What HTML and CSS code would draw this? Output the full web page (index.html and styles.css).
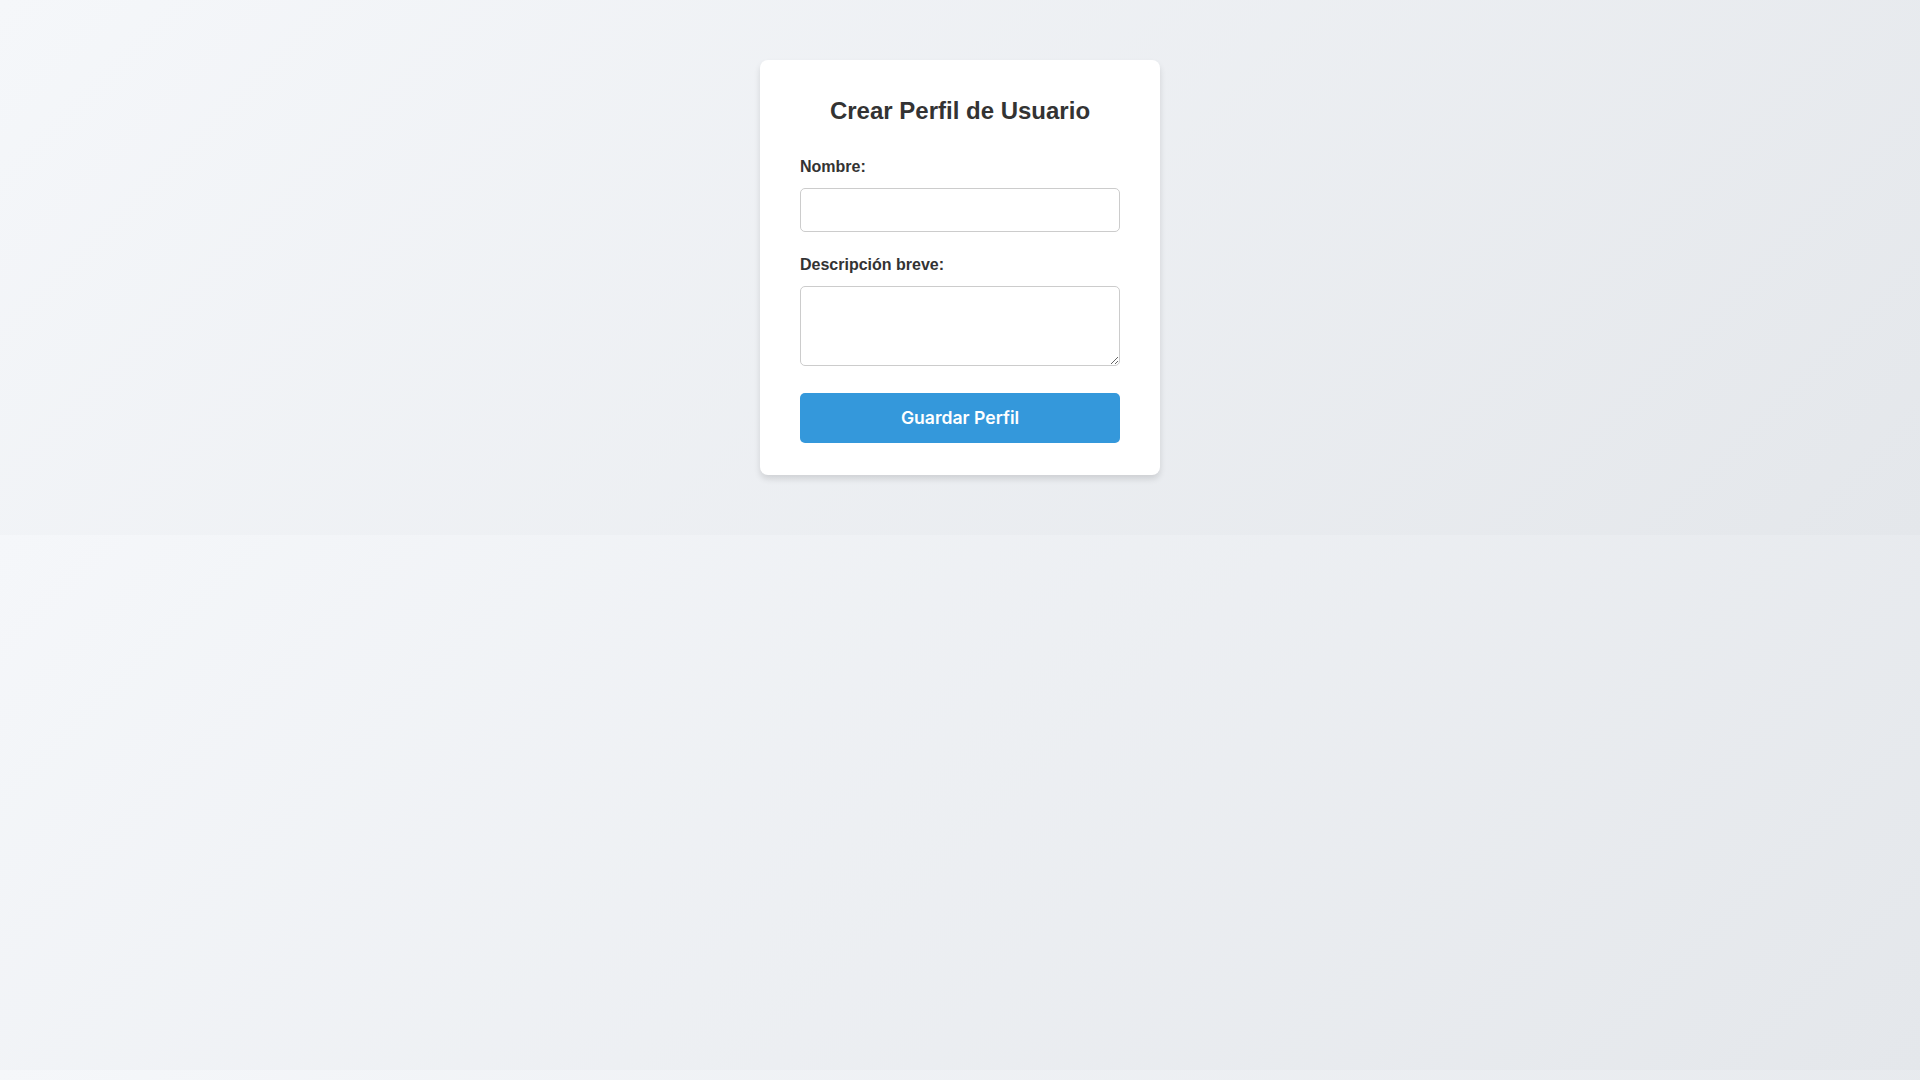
FILE: index.html
```html
<!DOCTYPE html>
<html lang="es">
<head>
<meta charset="utf-8">
<title>Crear Perfil de Usuario</title>
<link rel="stylesheet" href="styles.css">
</head>
<body>
  <div class="card">
    <h2 class="title">Crear Perfil de Usuario</h2>
    <form class="form">
      <div class="form-group">
        <label class="label" for="nombre">Nombre:</label>
        <input class="input" type="text" id="nombre">
      </div>
      <div class="form-group">
        <label class="label" for="desc">Descripción breve:</label>
        <textarea class="textarea" id="desc"></textarea>
      </div>
      <button class="button" type="button">Guardar Perfil</button>
    </form>
  </div>
</body>
</html>
```
FILE: styles.css
```css
body {
  margin: 0;
  padding: 20px;
  font-family: "Liberation Sans", Arial, sans-serif;
  line-height: 1.6;
  color: #333;
  background: linear-gradient(135deg, #f5f7fa 0%, #e4e7eb 100%);
}

.card {
  box-sizing: border-box;
  width: 400px;
  margin: 40px auto;
  padding: 32px 40px;
  background: #fff;
  border-radius: 8px;
  box-shadow: 0 4px 6px rgba(0, 0, 0, 0.12);
}

.title {
  margin: 0 0 24px;
  font-size: 24px;
  text-align: center;
  color: #333;
}

.form {
  margin: 0;
}

.form-group {
  margin-bottom: 20px;
}

.label {
  display: block;
  margin-bottom: 8px;
  font-weight: bold;
  font-size: 16px;
  color: #333;
}

.input,
.textarea {
  box-sizing: border-box;
  width: 100%;
  padding: 12px;
  border: 1px solid #ccc;
  border-radius: 5px;
  font-size: 16px;
  font-family: "Liberation Sans", Arial, sans-serif;
}

.input {
  height: 44px;
}

.textarea {
  height: 80px;
}

.button {
  display: block;
  width: 100%;
  padding: 14px;
  border: none;
  border-radius: 5px;
  background: #3498db;
  color: #fff;
  font-family: Inter, system-ui, sans-serif;
  font-weight: 600;
  font-size: 17.6px;
  line-height: 22px;
  cursor: pointer;
}
```
